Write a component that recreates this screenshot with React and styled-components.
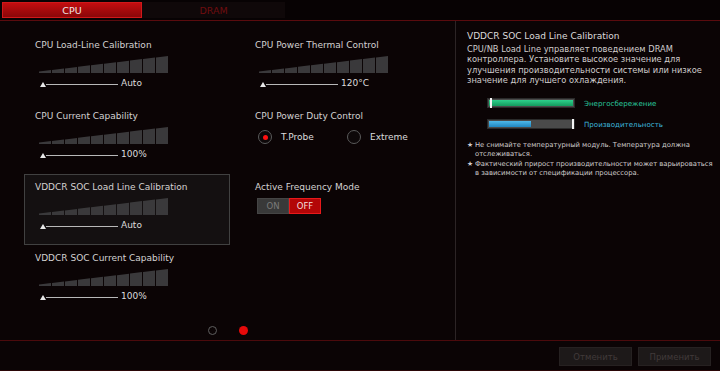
import React from "react";
import styled, { createGlobalStyle } from "styled-components";

const Global = createGlobalStyle`
  html, body { margin: 0; padding: 0; background: #0b0405; }
  body { font-family: "DejaVu Sans", "Liberation Sans", sans-serif; }
  * { box-sizing: border-box; }
`;

const Frame = styled.div`
  width: 720px;
  height: 371px;
  display: flex;
  flex-direction: column;
  background: #0b0405;
  color: #d2d0d0;
  overflow: hidden;
`;

const TabBar = styled.div`
  height: 21px;
  display: flex;
  align-items: flex-start;
  padding: 2px 0 0 2px;
  background: #070203;
  border-bottom: 1px solid #5a0b0e;
`;

const Tab = styled.div`
  width: ${(p) => p.$w}px;
  height: 16px;
  display: flex;
  align-items: center;
  justify-content: center;
  font-size: 9.5px;
  background: ${(p) =>
    p.$active ? "linear-gradient(#c20d0f, #8a0709)" : "#0f0809"};
  color: ${(p) => (p.$active ? "#f0e6e6" : "#6e0d0f")};
  border: 1px solid ${(p) => (p.$active ? "#d0181a" : "transparent")};
`;

const Main = styled.div`
  flex: 1;
  display: flex;
  min-height: 0;
`;

const LeftPanel = styled.div`
  width: 456px;
  border-right: 1px solid #2c2425;
  display: flex;
  flex-direction: column;
`;

const Grid = styled.div`
  display: grid;
  grid-template-columns: 206px 206px;
  grid-auto-rows: 71px;
  column-gap: 14px;
  padding: 11px 0 0 24px;
`;

const Item = styled.div`
  border: 1px solid ${(p) => (p.$selected ? "#414141" : "transparent")};
  background: ${(p) => (p.$selected ? "#141011" : "transparent")};
  padding: 6px 10px 0;
  display: flex;
  flex-direction: column;
`;

const Title = styled.div`
  font-size: 9px;
  line-height: 13px;
  color: #d4d2d2;
  white-space: nowrap;
`;

const BarsWrap = styled.div`
  margin: 4px 0 0 4px;
  height: 17px;
`;

const SliderRow = styled.div`
  margin: 5px 0 0 5px;
  height: 10px;
  display: flex;
  align-items: center;
`;

const Thumb = styled.div`
  width: 0;
  height: 0;
  border-left: 3.5px solid transparent;
  border-right: 3.5px solid transparent;
  border-bottom: 5px solid #e8e8e8;
  margin-top: 2px;
`;

const Track = styled.div`
  width: 72px;
  height: 1px;
  background: #b8b8b8;
  margin-top: 2px;
`;

const Value = styled.span`
  font-size: 9px;
  color: #dcdcdc;
  margin-left: 3px;
`;

const Radios = styled.div`
  display: flex;
  align-items: center;
  margin: 7px 0 0 3px;
`;

const RadioOpt = styled.div`
  display: flex;
  align-items: center;
  width: ${(p) => p.$w}px;
`;

const RadioCircle = styled.div`
  width: 14px;
  height: 14px;
  border-radius: 50%;
  border: 1px solid #5a5a5a;
  background: #0d0809;
  display: flex;
  align-items: center;
  justify-content: center;
  &::after {
    content: "";
    width: 5px;
    height: 5px;
    border-radius: 50%;
    background: ${(p) => (p.$on ? "#ff1010" : "transparent")};
  }
`;

const RadioLabel = styled.span`
  font-size: 9px;
  color: #dcdcdc;
  margin-left: 9px;
`;

const Toggle = styled.div`
  display: flex;
  margin: 4px 0 0 2px;
  width: 64px;
  height: 16px;
`;

const ToggleHalf = styled.div`
  flex: 1;
  display: flex;
  align-items: center;
  justify-content: center;
  font-size: 8.5px;
  background: ${(p) => (p.$on ? "#b30607" : "#393939")};
  color: ${(p) => (p.$on ? "#f2dede" : "#7a7a7a")};
  border: 1px solid ${(p) => (p.$on ? "#e8191b" : "#454545")};
`;

const Dots = styled.div`
  display: flex;
  justify-content: center;
  align-items: center;
  gap: 22px;
  margin-top: 9px;
  height: 10px;
`;

const Dot = styled.div`
  width: 9px;
  height: 9px;
  border-radius: 50%;
  background: ${(p) => (p.$active ? "#e60a0a" : "transparent")};
  border: ${(p) => (p.$active ? "none" : "1.5px solid #5e5e5e")};
`;

const RightPanel = styled.div`
  flex: 1;
  padding: 9px 4px 0 11px;
`;

const HelpTitle = styled.div`
  font-size: 9px;
  line-height: 13px;
  color: #dcdada;
`;

const HelpText = styled.div`
  margin-top: 1px;
  width: 235px;
  font-size: 8.3px;
  line-height: 10.3px;
  color: #cfcccc;
`;

const Legend = styled.div`
  margin: 13px 0 0 20px;
  display: flex;
  flex-direction: column;
  gap: 11px;
`;

const LegendRow = styled.div`
  display: flex;
  align-items: center;
  height: 10px;
`;

const Meter = styled.div`
  position: relative;
  width: 88px;
  height: 10px;
  background: #4a4a4a;
  border: 1px solid #2a2a2a;
  padding: 1px;
`;

const MeterFill = styled.div`
  height: 100%;
  background: ${(p) => p.$color};
`;

const MeterMark = styled.div`
  position: absolute;
  top: -1px;
  width: 2px;
  height: 10px;
  background: #f4f4f4;
`;

const LegendLabel = styled.span`
  margin-left: 9px;
  font-size: 7.1px;
  color: ${(p) => p.$color};
`;

const Notes = styled.div`
  margin-top: 12px;
  display: flex;
  flex-direction: column;
  gap: 2px;
`;

const Note = styled.div`
  display: flex;
  font-size: 6.8px;
  line-height: 8.6px;
  color: #cfcccc;
`;

const Star = styled.span`
  width: 8px;
  flex: none;
`;

const Footer = styled.div`
  height: 31px;
  border-top: 1px solid #4c0a0c;
  border-bottom: 1px solid #2a0607;
  display: flex;
  justify-content: flex-end;
  align-items: flex-start;
  gap: 6px;
  padding: 6px 9px 0 0;
`;

const Button = styled.div`
  width: 73px;
  height: 19px;
  background: #1d1919;
  border: 1px solid #262121;
  color: #413a3a;
  font-size: 8.5px;
  display: flex;
  align-items: center;
  justify-content: center;
`;

function Bars() {
  const n = 10;
  const w = 12;
  const gap = 1;
  const total = n * w + (n - 1) * gap;
  const H = 17;
  const topAt = (x) => H - 1.5 - (x / total) * (H - 1.5);
  return (
    <svg width={total} height={H} viewBox={`0 0 ${total} ${H}`}>
      {Array.from({ length: n }).map((_, i) => {
        const x0 = i * (w + gap);
        const x1 = x0 + w;
        return (
          <polygon
            key={i}
            points={`${x0},${H} ${x0},${topAt(x0)} ${x1},${topAt(x1)} ${x1},${H}`}
            fill="#3a393b"
          />
        );
      })}
    </svg>
  );
}

function SliderItem({ title, value, selected }) {
  return (
    <Item $selected={selected}>
      <Title>{title}</Title>
      <BarsWrap>
        <Bars />
      </BarsWrap>
      <SliderRow>
        <Thumb />
        <Track />
        <Value>{value}</Value>
      </SliderRow>
    </Item>
  );
}

export default function App() {
  return (
    <Frame>
      <Global />
      <TabBar>
        <Tab $w={140} $active>
          CPU
        </Tab>
        <Tab $w={143}>DRAM</Tab>
      </TabBar>
      <Main>
        <LeftPanel>
          <Grid>
            <SliderItem title="CPU Load-Line Calibration" value="Auto" />
            <SliderItem title="CPU Power Thermal Control" value="120°C" />
            <SliderItem title="CPU Current Capability" value="100%" />
            <Item>
              <Title>CPU Power Duty Control</Title>
              <Radios>
                <RadioOpt $w={89}>
                  <RadioCircle $on />
                  <RadioLabel>T.Probe</RadioLabel>
                </RadioOpt>
                <RadioOpt $w={80}>
                  <RadioCircle />
                  <RadioLabel>Extreme</RadioLabel>
                </RadioOpt>
              </Radios>
            </Item>
            <SliderItem
              title="VDDCR SOC Load Line Calibration"
              value="Auto"
              selected
            />
            <Item>
              <Title>Active Frequency Mode</Title>
              <Toggle>
                <ToggleHalf>ON</ToggleHalf>
                <ToggleHalf $on>OFF</ToggleHalf>
              </Toggle>
            </Item>
            <SliderItem title="VDDCR SOC Current Capability" value="100%" />
          </Grid>
          <Dots>
            <Dot />
            <Dot $active />
          </Dots>
        </LeftPanel>
        <RightPanel>
          <HelpTitle>VDDCR SOC Load Line Calibration</HelpTitle>
          <HelpText>
            CPU/NB Load Line управляет поведением DRAM контроллера. Установите
            высокое значение для улучшения производительности системы или
            низкое значение для лучшего охлаждения.
          </HelpText>
          <Legend>
            <LegendRow>
              <Meter>
                <MeterFill $color="linear-gradient(#2fd08c, #139a5e)" />
                <MeterMark style={{ left: "2px" }} />
              </Meter>
              <LegendLabel $color="#28c49a">Энергосбережение</LegendLabel>
            </LegendRow>
            <LegendRow>
              <Meter>
                <MeterFill
                  $color="linear-gradient(#4fb8e8, #1f86c0)"
                  style={{ width: "50%" }}
                />
                <MeterMark style={{ left: "84px" }} />
              </Meter>
              <LegendLabel $color="#3cb6dc">Производительность</LegendLabel>
            </LegendRow>
          </Legend>
          <Notes>
            <Note>
              <Star>★</Star>
              <span>
                Не снимайте температурный модуль. Температура должна
                отслеживаться.
              </span>
            </Note>
            <Note>
              <Star>★</Star>
              <span>
                Фактический прирост производительности может варьироваться в
                зависимости от спецификации процессора.
              </span>
            </Note>
          </Notes>
        </RightPanel>
      </Main>
      <Footer>
        <Button>Отменить</Button>
        <Button>Применить</Button>
      </Footer>
    </Frame>
  );
}
